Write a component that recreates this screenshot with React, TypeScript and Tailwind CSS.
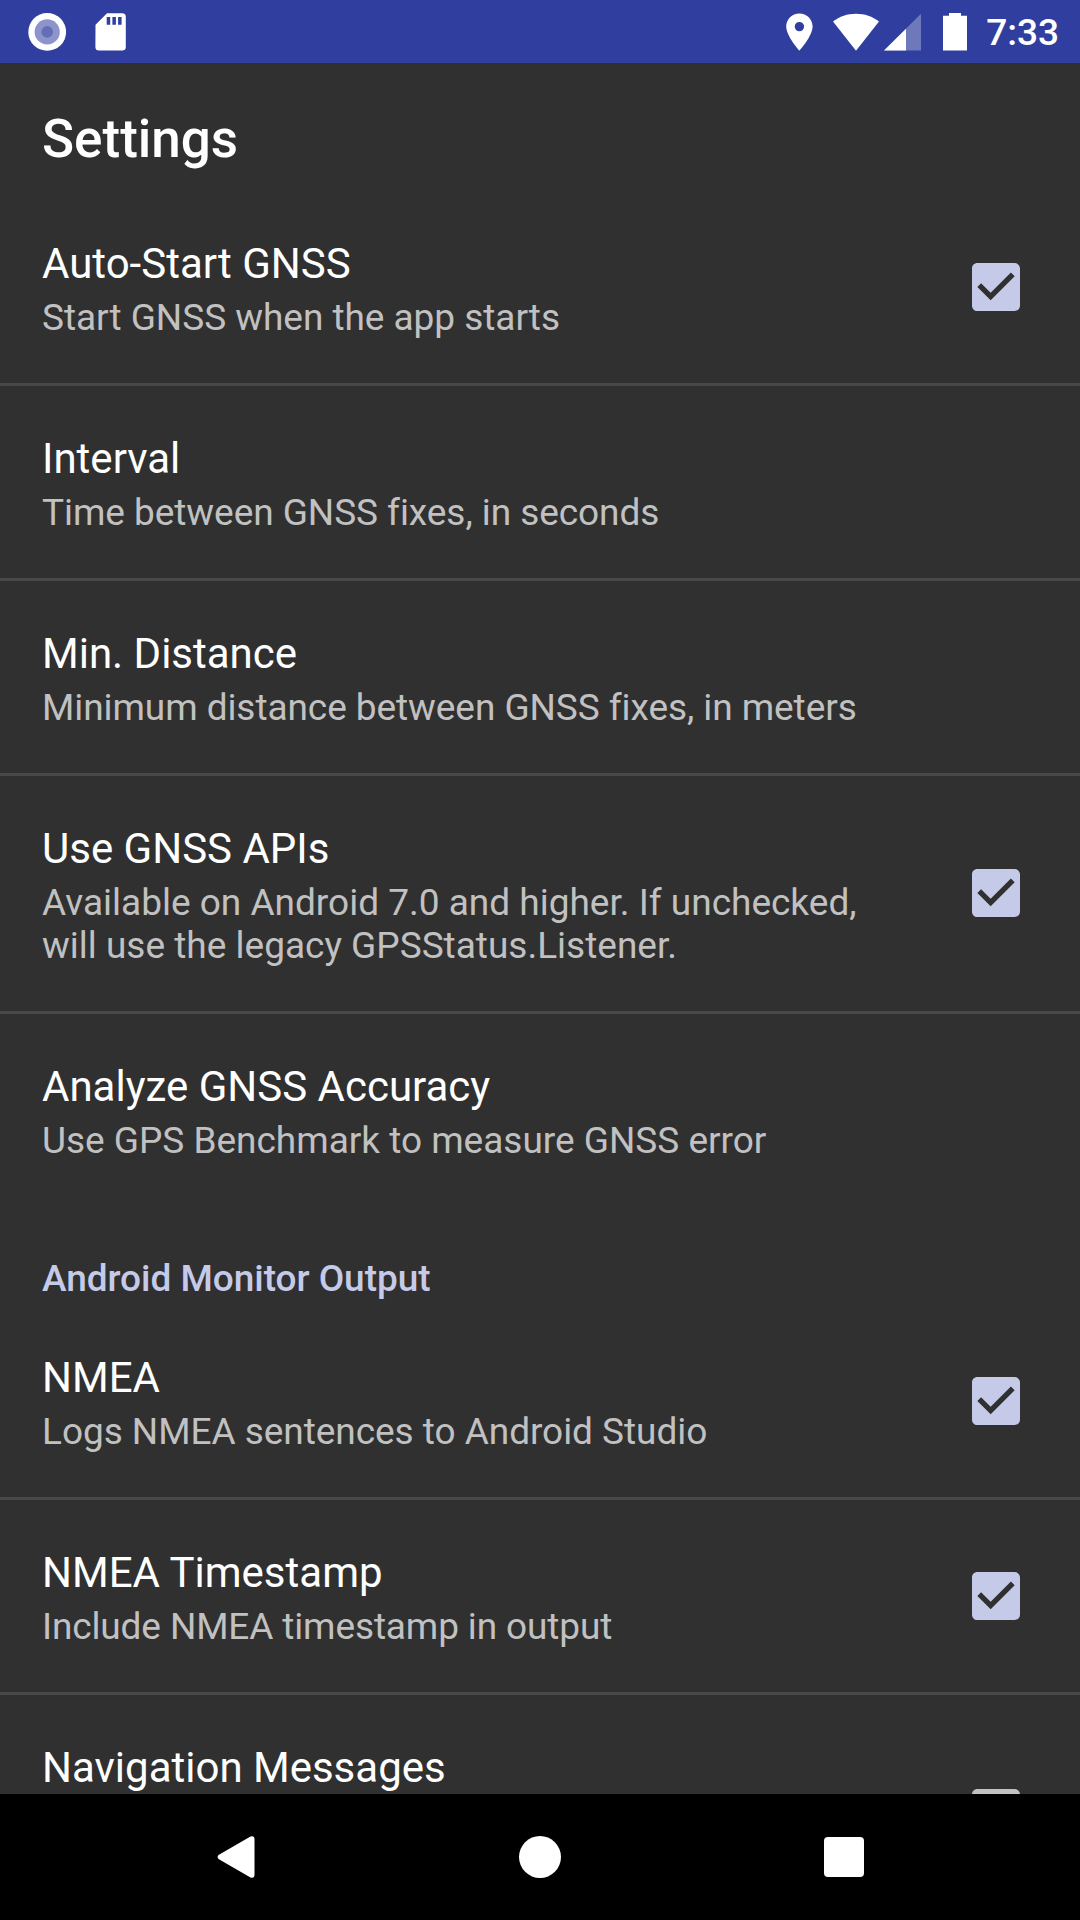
import React from 'react';

type Item = { title: string; sub: React.ReactNode; checked?: boolean; height: string; divider?: boolean; tracking?: string };

const first: Item[] = [
  { title: 'Auto-Start GNSS', sub: 'Start GNSS when the app starts', checked: true, height: 'h-[195px]', divider: true, tracking: 'tracking-[-0.04px]' },
  { title: 'Interval', sub: 'Time between GNSS fixes, in seconds', height: 'h-[195px]', divider: true, tracking: 'tracking-[-0.06px]' },
  { title: 'Min. Distance', sub: 'Minimum distance between GNSS fixes, in meters', height: 'h-[195px]', divider: true, tracking: 'tracking-[-0.07px]' },
  { title: 'Use GNSS APIs', sub: <>Available on Android 7.0 and higher. If unchecked,<br />will use the legacy GPSStatus.Listener.</>, checked: true, height: 'h-[238px] pb-px', divider: true },
  { title: 'Analyze GNSS Accuracy', sub: 'Use GPS Benchmark to measure GNSS error', height: 'h-[192px]', tracking: 'tracking-[-0.015px]' },
];

const second: Item[] = [
  { title: 'NMEA', sub: 'Logs NMEA sentences to Android Studio', checked: true, height: 'h-[195px]', divider: true, tracking: 'tracking-[-0.045px]' },
  { title: 'NMEA Timestamp', sub: 'Include NMEA timestamp in output', checked: true, height: 'h-[195px]', divider: true, tracking: 'tracking-[-0.13px]' },
  { title: 'Navigation Messages', sub: null, checked: false, height: 'h-[235px]' },
];

function Check({ checked }: { checked: boolean }) {
  return (
    <svg className="mr-[60px] size-12 shrink-0 self-center" viewBox="3 3 18 18" fill={checked ? '#c5cae9' : '#c1c1c1'}>
      {checked ? (
        <path d="M19 3H5c-1.11 0-2 .9-2 2v14c0 1.1.89 2 2 2h14c1.11 0 2-.9 2-2V5c0-1.1-.89-2-2-2zm-9 14l-5-5 1.41-1.41L10 14.17l7.59-7.59L19 8l-9 9z" />
      ) : (
        <path d="M19 5v14H5V5h14m0-2H5c-1.1 0-2 .9-2 2v14c0 1.1.9 2 2 2h14c1.1 0 2-.9 2-2V5c0-1.1-.9-2-2-2z" />
      )}
    </svg>
  );
}

function Row({ item }: { item: Item }) {
  return (
    <div className={`flex shrink-0 items-start justify-between ${item.height} ${item.divider ? 'border-b-[3px] border-[#484848]' : ''}`}>
      <div className="pl-[42px] pt-12">
        <div className="whitespace-nowrap text-[42px] leading-[50px] text-white">{item.title}</div>
        <div className={`mt-[7px] whitespace-nowrap text-[37px] leading-[43px] text-[#c1c1c1] ${item.tracking ?? ''}`}>{item.sub}</div>
      </div>
      {item.checked !== undefined && <Check checked={item.checked} />}
    </div>
  );
}

function StatusBar() {
  return (
    <header className="flex h-[63px] shrink-0 items-center justify-between bg-[#303f9f] pl-7 pr-[21px] text-white">
      <div className="flex items-center gap-[29px]">
        <svg className="size-[38px]" viewBox="0 0 38 38">
          <circle cx="19.2" cy="18.9" r="18.9" fill="#fff" />
          <circle cx="19.2" cy="18.9" r="12.6" fill="#8c94cb" />
          <circle cx="19.2" cy="18.9" r="5.8" fill="#656db6" />
        </svg>
        <svg className="h-[38px] w-[31px]" viewBox="0 0 31 38" fill="#fff">
          <path fillRule="evenodd" d="M12 .2H27.200a3.600 3.600 0 0 1 3.600 3.600V34a3.600 3.600 0 0 1-3.600 3.600H4A3.600 3.600 0 0 1 .4 34L.5 11.700ZM11.700 4V11.700H15.200V4ZM17.400 4V11.700H20.900V4ZM23.100 4V11.700H26.600V4Z" />
        </svg>
      </div>
      <div className="flex items-center">
        <svg className="mr-5 h-[38px] w-[27px]" viewBox="0 0 27 38" fill="#fff">
          <path fillRule="evenodd" d="M13.400.5C6 .5.200 6.400.200 13.600c0 9.600 13.200 24.200 13.200 24.200S26.600 23.200 26.600 13.600C26.600 6.400 20.800.5 13.400.5Zm0 17.800a4.700 4.700 0 1 1 0-9.400 4.700 4.700 0 0 1 0 9.400Z" />
        </svg>
        <svg className="mr-[5px] h-[38px] w-[46px]" viewBox="0 0 46 38" fill="#fff">
          <path d="M0 8.500C6.500 3.500 14.500.8 23 .8s16.500 2.700 23 7.700L23 37.800Z" />
        </svg>
        <svg className="mr-[22px] h-[38px] w-[37px]" viewBox="0 0 37 38" fill="#fff">
          <path d="M0 37.600H37V.8Z" fillOpacity=".3" />
          <path d="M0 37.600H22V15.700Z" />
        </svg>
        <svg className="mr-[19px] h-[38px] w-6" viewBox="0 0 24 38" fill="#fff">
          <path d="M6 0H18V2.800H24V37.600H0V2.800H6Z" />
        </svg>
        <span className="pt-[3px] text-[37px] font-medium leading-[44px]">7:33</span>
      </div>
    </header>
  );
}

export default function App() {
  return (
    <div className="flex h-[1920px] w-[1080px] flex-col overflow-hidden bg-[#303030] font-['Roboto',sans-serif]">
      <StatusBar />
      <main className="flex min-h-0 flex-1 flex-col overflow-hidden">
        <h1 className="flex h-32 shrink-0 items-center pl-[42px] pt-[26px] text-[53px] font-medium text-white">Settings</h1>
        {first.map((i) => <Row key={i.title} item={i} />)}
        <h2 className="flex h-[99px] shrink-0 items-center pl-[42px] pt-[46px] text-[37px] font-medium tracking-[-0.04px] text-[#c5cae9]">Android Monitor Output</h2>
        {second.map((i) => <Row key={i.title} item={i} />)}
      </main>
      <nav className="z-10 flex h-[126px] shrink-0 items-center justify-between bg-black pl-[217px] pr-[216px]">
        <svg className="h-[42px] w-[38px]" viewBox="0 0 38 42" fill="#fff">
          <path d="M1.500 19 33.500.5Q37.500-.7 37.500 3.500V38.500Q37.500 42.700 33.500 41.500L1.500 23Q-.3 21 1.500 19Z" />
        </svg>
        <div className="size-[42px] rounded-full bg-white" />
        <div className="size-10 rounded-[4px] bg-white" />
      </nav>
    </div>
  );
}
